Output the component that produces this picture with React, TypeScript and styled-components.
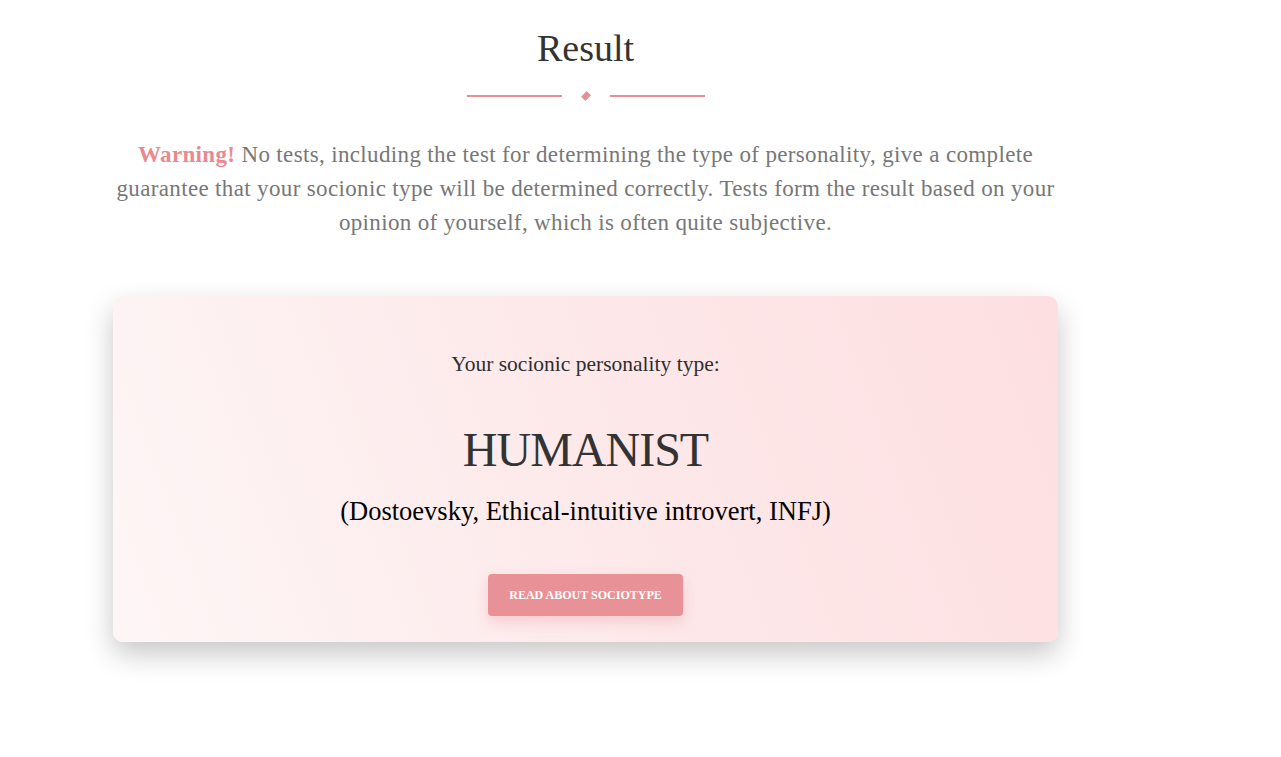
import styled, { createGlobalStyle } from 'styled-components';

const Global = createGlobalStyle`
  html, body {
    margin: 0;
    padding: 0;
    background: #fff;
  }
  body {
    font-family: "Liberation Serif", "DejaVu Serif", serif;
    color: #333;
  }
`;

const Page = styled.main`
  width: 945px;
  margin: 0 0 0 113px;
  padding: 22px 0 120px;
`;

const Title = styled.h1`
  margin: 0;
  text-align: center;
  font-size: 38px;
  font-weight: 400;
  line-height: 52px;
  color: #333;
`;

const Divider = styled.div`
  display: flex;
  align-items: center;
  justify-content: center;
  gap: 18px;
  margin: 19px 0 39px;
`;

const Line = styled.span`
  width: 95px;
  height: 2px;
  background: #e88f93;
`;

const Diamond = styled.span`
  width: 6px;
  height: 6px;
  background: #e88f93;
  transform: rotate(45deg) scaleY(1.3);
  margin: 0 3px;
`;

const Note = styled.p`
  margin: 0 auto;
  text-align: center;
  font-size: 23px;
  letter-spacing: 0.35px;
  line-height: 34px;
  color: #777;
`;

const Warn = styled.strong`
  color: #e88a8f;
  font-weight: 700;
`;

const Card = styled.section`
  margin-top: 56px;
  border-radius: 10px;
  background: linear-gradient(70deg, #fef6f6 0%, #fde9ea 50%, #fddfe1 100%);
  box-shadow: 0 12px 28px rgba(0, 0, 0, 0.22);
  padding: 53px 40px 26px;
  display: flex;
  flex-direction: column;
  align-items: center;
  text-align: center;
`;

const Label = styled.p`
  margin: 0;
  font-size: 21.5px;
  line-height: 30px;
  color: #2e2e2e;
`;

const TypeName = styled.h2`
  margin: 40px 0 0;
  font-size: 48px;
  font-weight: 400;
  letter-spacing: -1px;
  line-height: 62px;
  color: #333;
`;

const Aliases = styled.p`
  margin: 13px 0 0;
  font-size: 26.5px;
  line-height: 34px;
  color: #000;
`;

const Button = styled.button`
  margin-top: 46px;
  width: 195px;
  height: 42px;
  border: none;
  border-radius: 4px;
  background: #e89297;
  color: #fff;
  font-family: inherit;
  font-size: 12px;
  font-weight: 700;
  text-transform: uppercase;
  box-shadow: 0 6px 14px rgba(232, 146, 151, 0.35);
  cursor: pointer;
`;

export default function App() {
  return (
    <>
      <Global />
      <Page>
        <Title>Result</Title>
        <Divider>
          <Line />
          <Diamond />
          <Line />
        </Divider>
        <Note>
          <Warn>Warning!</Warn> No tests, including the test for determining the type of
          personality, give a complete guarantee that your socionic type will be determined
          correctly. Tests form the result based on your opinion of yourself, which is often
          quite subjective.
        </Note>
        <Card>
          <Label>Your socionic personality type:</Label>
          <TypeName>HUMANIST</TypeName>
          <Aliases>(Dostoevsky, Ethical-intuitive introvert, INFJ)</Aliases>
          <Button>Read about sociotype</Button>
        </Card>
      </Page>
    </>
  );
}
